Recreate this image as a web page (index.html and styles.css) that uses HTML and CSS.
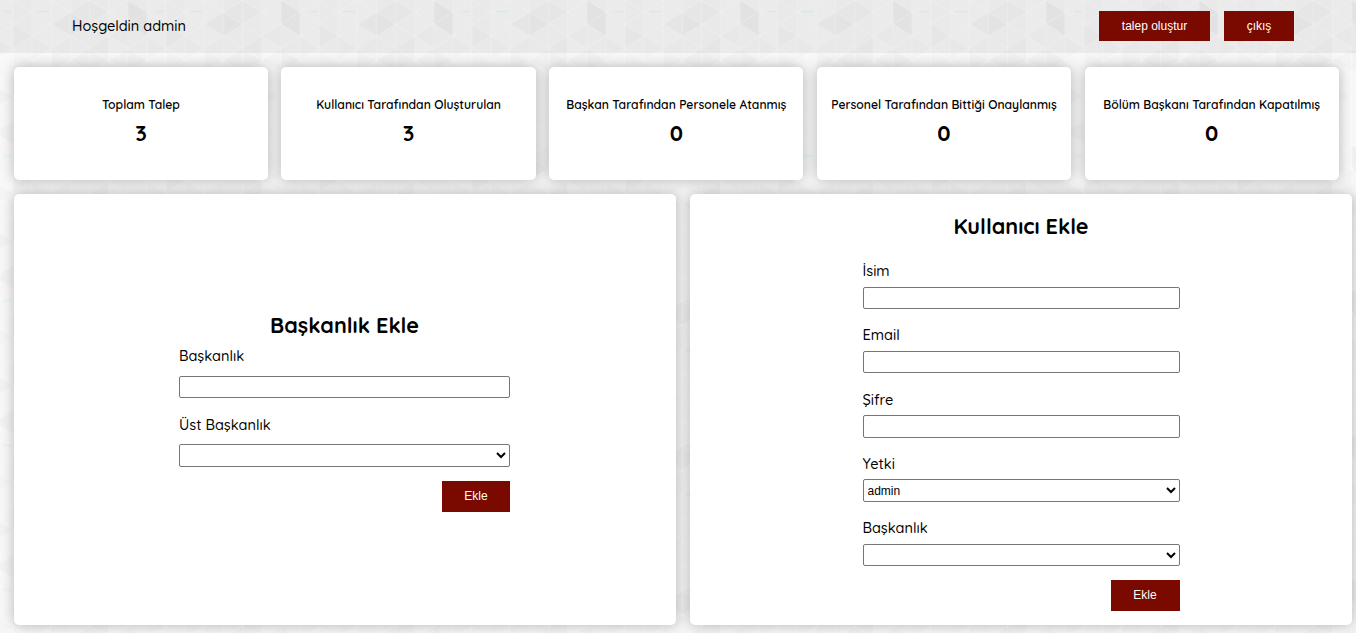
FILE: index.html
```html
<!DOCTYPE html>
<html lang="tr">
<head>
<meta charset="utf-8">
<title>Talep Yönetimi</title>
<link rel="stylesheet" href="styles.css">
</head>
<body>
<svg class="backdrop" aria-hidden="true">
  <defs>
    <pattern id="triangles" x="13.1" y="0" width="153" height="144.6" patternUnits="userSpaceOnUse">
      <rect width="153" height="144.6" fill="#f8f8f8"/>
      <g fill="#000">
        <path opacity=".028" d="M114.8 0V24.1L133.9 12zM114.8 24.1L133.9 12V36.1z"/>
        <path opacity=".022" d="M38.2 24.1L57.4 12 76.5 24.1 57.4 36.1z"/>
        <path opacity=".01" d="M0 24.1L19.1 36.1 0 48.2zM57.4 12L76.5 0V24.1zM95.6 36.1L114.8 24.1V48.2zM133.9 36.1L153 48.2 133.9 60.2zM38.2 48.2L57.4 60.2V36.1zM76.5 48.2L95.6 36.1V60.2zM19.1 36.1L38.2 48.2 19.1 60.2zM76.5 0L95.6 12 76.5 24.1z"/>
        <path opacity=".015" d="M38.2 48.2L57.4 60.2 38.2 72.3zM57.4 60.2L76.5 48.2V72.3zM76.5 48.2L95.6 60.2 76.5 72.3zM95.6 60.2L114.8 48.2 133.9 60.2 114.8 72.3z"/>
        <path opacity=".02" d="M133.9 132.5L153 120.5V144.6zM133.9 84.3L153 96.4 133.9 108.4z"/>
        <path opacity=".012" d="M0 72.3L19.1 84.3 0 96.4zM95.6 84.3L114.8 96.4 95.6 108.4zM38.2 96.4L57.4 108.4 38.2 120.5zM76.5 120.5L95.6 132.5 76.5 144.6zM0 120.5L19.1 132.5 0 144.6z"/>
        <path opacity=".006" d="M0 0H19.1V144.6H0zM57.4 0H95.6V144.6H57.4zM114.8 0H133.9V144.6H114.8z"/>
      </g>
      <g stroke="#fff" stroke-opacity=".45" fill="none">
        <path d="M0 0V145M19.1 0V145M38.2 0V145M57.4 0V145M76.5 0V145M95.6 0V145M114.8 0V145M133.9 0V145M153 0V145"/>
        <path d="M0 0L153 96.4M0 24.1L153 120.5M0 48.2L153 144.6M0 72.3L114.8 144.6M0 96.4L76.5 144.6M0 120.5L38.2 144.6M38.2 0L153 72.3M76.5 0L153 48.2M114.8 0L153 24.1"/>
        <path d="M153 0L0 96.4M153 24.1L0 120.5M153 48.2L0 144.6M153 72.3L38.2 144.6M153 96.4L76.5 144.6M153 120.5L114.8 144.6M114.8 0L0 72.3M76.5 0L0 48.2M38.2 0L0 24.1"/>
      </g>
      <path stroke="#e3f7f5" stroke-width="1.6" d="M143 11.5H151M24 11.5H36"/>
    </pattern>
  </defs>
  <rect width="100%" height="100%" fill="url(#triangles)"/>
</svg>

<header class="topbar">
  <span class="welcome">Hoşgeldin admin</span>
  <nav class="actions">
    <button class="btn btn-wide">talep oluştur</button>
    <button class="btn btn-exit">çıkış</button>
  </nav>
</header>

<section class="stats">
  <div class="card stat"><h4>Toplam Talep</h4><strong>3</strong></div>
  <div class="card stat"><h4>Kullanıcı Tarafından Oluşturulan</h4><strong>3</strong></div>
  <div class="card stat"><h4>Başkan Tarafından Personele Atanmış</h4><strong>0</strong></div>
  <div class="card stat"><h4>Personel Tarafından Bittiği Onaylanmış</h4><strong>0</strong></div>
  <div class="card stat"><h4>Bölüm Başkanı Tarafından Kapatılmış</h4><strong>0</strong></div>
</section>

<main class="panels">
  <section class="card panel">
    <form class="form form-dept">
      <h2>Başkanlık Ekle</h2>
      <label for="dept">Başkanlık</label>
      <input id="dept" type="text">
      <label for="parent">Üst Başkanlık</label>
      <select id="parent"><option></option></select>
      <button type="button" class="btn">Ekle</button>
    </form>
  </section>
  <section class="card panel">
    <form class="form form-user">
      <h2>Kullanıcı Ekle</h2>
      <label for="name">İsim</label>
      <input id="name" type="text">
      <label for="email">Email</label>
      <input id="email" type="text">
      <label for="pass">Şifre</label>
      <input id="pass" type="password">
      <label for="role">Yetki</label>
      <select id="role"><option>admin</option></select>
      <label for="userdept">Başkanlık</label>
      <select id="userdept"><option></option></select>
      <button type="button" class="btn">Ekle</button>
    </form>
  </section>
</main>
</body>
</html>
```
FILE: styles.css
```css
* { box-sizing: border-box; }

body {
  margin: 0;
  height: 633px;
  overflow: hidden;
  background: #f8f8f8;
  color: #000;
  font-family: Quicksand, Lato, sans-serif;
  font-size: 14.5px;
  font-weight: 500;
}

.backdrop {
  position: absolute;
  inset: 0;
  width: 100%;
  height: 100%;
  z-index: -1;
}

.topbar {
  display: flex;
  align-items: center;
  justify-content: space-between;
  height: 53px;
  padding: 0 62px 1px 72px;
  background: rgba(0, 0, 0, .05);
}

.welcome { padding-bottom: 2px; }
.actions { display: flex; gap: 14px; }

.btn {
  height: 31px;
  width: 69px;
  padding: 0;
  border: 0;
  background: #7a0a00;
  color: #fff;
  font: 12px "Liberation Sans", Arial, sans-serif;
}
.actions .btn { height: 30px; }
.actions .btn-wide { width: 111px; }
.actions .btn-exit { width: 70px; }

.card {
  background: #fff;
  border-radius: 5px;
  box-shadow: 0 0 14px rgba(0, 0, 0, .28);
}

.stats {
  display: grid;
  grid-template-columns: repeat(5, 1fr);
  gap: 13.4px;
  width: 1325px;
  height: 113px;
  margin: 14px 0 14px 13.8px;
}

.stat {
  display: flex;
  flex-direction: column;
  align-items: center;
  padding-top: 29px;
}
.stat h4 {
  margin: 0;
  font-size: 12.15px;
  font-weight: 600;
  line-height: 18px;
  white-space: nowrap;
}
.stat strong {
  margin-top: 5px;
  font-size: 21.6px;
  line-height: 27px;
  font-weight: 700;
}

.panels {
  display: grid;
  grid-template-columns: 662px 662px;
  gap: 14px;
  margin-left: 14px;
}
.panel {
  display: flex;
  justify-content: center;
  height: 431px;
}

.form { display: flex; flex-direction: column; }
.form h2 {
  margin: 0;
  text-align: center;
  font-size: 21.6px;
  line-height: 27px;
  font-weight: 700;
}
.form label { line-height: 20px; }
.form input,
.form select {
  width: 100%;
  height: 22px;
  margin: 0;
  border: 1px solid #767676;
  border-radius: 2px;
  background-color: #fff;
  color: #000;
  font: 12px "Liberation Sans", Arial, sans-serif;
}
.form input { padding: 1px 2px; }
.form .btn { align-self: flex-end; margin-top: 14px; padding-bottom: 1px; }

.form-dept { width: 331px; margin-right: 1px; padding-top: 117px; }
.form-dept label { margin: 8px 0 10px; }
.form-dept input + label { margin-top: 17px; margin-bottom: 9px; }
.form-dept select { height: 23px; }
.form-dept .btn { width: 68px; }

.form-user { width: 317px; padding-top: 18px; }
.form-user label { margin: 16.2px 0 5.6px; }
.form-user h2 + label { margin-top: 22.3px; }
.form-user input,
.form-user select { height: 22.4px; }
```
